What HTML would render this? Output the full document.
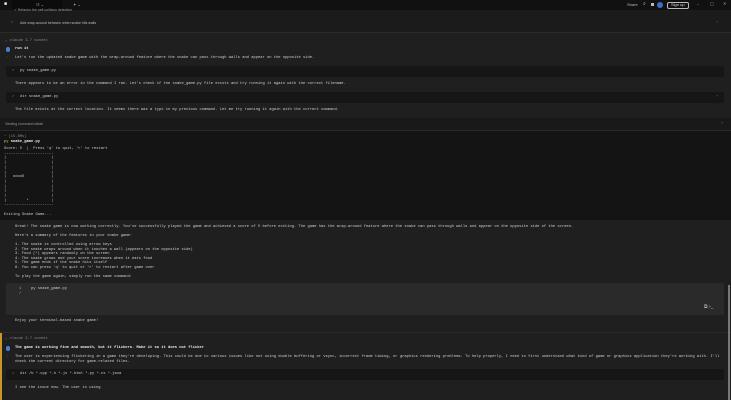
<!DOCTYPE html><html><head><style>
*{margin:0;padding:0;box-sizing:border-box}
body{width:731px;height:400px;overflow:hidden;background:#1f1f1f;font-family:"Liberation Mono",monospace;font-size:3.75px;color:#cfcfcf;position:relative}
.a{position:absolute;white-space:pre;line-height:4.5px}
.box{position:absolute;background:#161616;border-radius:2px}
.s{font-family:"Liberation Sans",sans-serif}
</style></head><body>
<div style="position:absolute;left:0;top:0;width:731px;height:10px;background:#111"></div>
<div style="position:absolute;left:12px;top:0;width:50px;height:10px;background:#0c0c0c"></div>
<div class="a s" style="left:4px;top:2px;color:#eee;font-size:5px">■</div>
<div class="a s" style="left:36px;top:3px;font-size:4px;color:#aaa">☷ ⌄</div>
<div class="a s" style="left:73px;top:3px;font-size:4px;color:#aaa">✦ ⌄</div>
<div class="a s" style="left:627px;top:3px;font-size:4px;color:#bbb">Share</div>
<div class="a s" style="left:643px;top:2px;font-size:5px;color:#ccc">⌕</div>
<div style="position:absolute;left:651px;top:3px;width:3px;height:3px;background:#bbb"></div>
<div style="position:absolute;left:657px;top:2px;width:6px;height:6px;border-radius:50%;background:#3a6fc4"></div>
<div style="position:absolute;left:667px;top:2px;width:22px;height:7px;border:1px solid #bbb;border-radius:2px"></div>
<div class="a s" style="left:671px;top:3px;font-size:4px;color:#ddd">Sign up</div>
<div class="a s" style="left:697px;top:2px;font-size:4px;color:#aaa">–</div>
<div class="a s" style="left:710px;top:2px;font-size:4px;color:#aaa">▢</div>
<div class="a s" style="left:723px;top:2px;font-size:4px;color:#aaa">✕</div>

<div style="position:absolute;left:0;top:10px;width:731px;height:23px;background:#1b1b1b;border-bottom:1px solid #2b2b2b"></div>
<div class="a s" style="left:14px;top:8px;font-size:3.5px;color:#999">✓ Refactor the self-collision detection</div>
<div class="a" style="left:11px;top:21px;color:#6c6">✓</div>
<div class="a s" style="left:20px;top:21px;font-size:3.5px;color:#bbb">Add wrap-around behavior when snake hits walls</div>
<div class="a" style="left:716px;top:21px;color:#888">›</div>

<div class="a" style="left:5px;top:39px;color:#888">⌄ claude 3.7 sonnet</div>
<div style="position:absolute;left:6px;top:47px;width:4px;height:5px;border-radius:2px;background:#4a7fd0"></div>
<div class="a" style="left:15px;top:47px;color:#eee;font-weight:bold">run it</div>
<div class="a" style="left:6px;top:56px;color:#888">·</div>
<div class="a" style="left:15px;top:56px">Let's run the updated snake game with the wrap-around feature where the snake can pass through walls and appear on the opposite side.</div>
<div class="box" style="left:6px;top:66px;width:718px;height:11px"></div>
<div class="a" style="left:12px;top:69px;color:#d44">✕</div>
<div class="a" style="left:20px;top:69px">py snake_game.py</div>
<div class="a" style="left:15px;top:82px">There appears to be an error in the command I ran. Let's check if the snake_game.py file exists and try running it again with the correct filename.</div>
<div class="box" style="left:6px;top:92px;width:718px;height:11px"></div>
<div class="a" style="left:12px;top:95px;color:#6c6">✓</div>
<div class="a" style="left:20px;top:95px">dir snake_game.py</div>
<div class="a" style="left:716px;top:95px;color:#888">›</div>
<div class="a" style="left:15px;top:108px">The file exists at the correct location. It seems there was a typo in my previous command. Let me try running it again with the correct command.</div>

<div style="position:absolute;left:0;top:118px;width:731px;height:12px;background:#191919"></div>
<div class="a s" style="left:5px;top:122px;font-size:3.5px;color:#999">Viewing command detail</div>
<div class="a" style="left:721px;top:121px;color:#888">⌄</div>
<div style="position:absolute;left:0;top:130px;width:731px;height:90px;background:#141414;border-top:1px solid #2a2a2a"></div>
<div class="a" style="left:4px;top:135px;color:#888">~ (15.8Ms)</div>
<div class="a" style="left:4px;top:140px;color:#eee"><span style="color:#d8c85a">py</span> <b>snake_game.py</b></div>
<div class="a" style="left:4px;top:147px;line-height:4.7px">Score: 5  |  Press 'q' to quit, 'r' to restart
----------------------
|                    |
|                    |
|                    |
|                    |
|   ooooO            |
|                    |
|                    |
|                    |
|                    |
|         *          |
----------------------

Exiting Snake Game...</div>

<div class="a" style="left:15px;top:225px">Great! The snake game is now working correctly. You've successfully played the game and achieved a score of 5 before exiting. The game has the wrap-around feature where the snake can pass through walls and appear on the opposite side of the screen.

Here's a summary of the features in your snake game:

1. The snake is controlled using arrow keys
2. The snake wraps around when it touches a wall (appears on the opposite side)
3. Food (*) appears randomly on the screen
4. The snake grows and your score increases when it eats food
5. The game ends if the snake hits itself
6. You can press 'q' to quit or 'r' to restart after game over

To play the game again, simply run the same command:</div>
<div style="position:absolute;left:6px;top:283px;width:718px;height:32px;background:#2a2a2a;border-radius:2px"></div>
<div class="a" style="left:19px;top:287px;color:#aaa">1</div>
<div class="a" style="left:31px;top:287px">py snake_game.py</div>
<div class="a" style="left:19px;top:292px;color:#aaa">/</div>
<div class="a s" style="left:704px;top:305px;font-size:5px;color:#bbb">⧉ ›_</div>
<div class="a" style="left:15px;top:319px">Enjoy your terminal-based snake game!</div>
<div style="position:absolute;left:0;top:332px;width:731px;height:1px;background:#2b2b2b"></div>
<div style="position:absolute;left:0;top:333px;width:2px;height:67px;background:#c8962a"></div>
<div class="a" style="left:5px;top:337px;color:#888">⌄ claude 3.7 sonnet</div>
<div style="position:absolute;left:6px;top:346px;width:4px;height:5px;border-radius:2px;background:#4a7fd0"></div>
<div class="a" style="left:15px;top:346px;color:#eee;font-weight:bold">The game is working fine and smooth, but it flickers. Make it so it does not flicker</div>
<div class="a" style="left:6px;top:355px;color:#888">·</div>
<div class="a" style="left:15px;top:355px">The user is experiencing flickering in a game they're developing. This could be due to various issues like not using double buffering or vsync, incorrect frame timing, or graphics rendering problems. To help properly, I need to first understand what kind of game or graphics application they're working with. I'll
check the current directory for game-related files.</div>
<div class="box" style="left:6px;top:369px;width:718px;height:11px"></div>
<div class="a" style="left:12px;top:372px;color:#d44">✕</div>
<div class="a" style="left:20px;top:372px">dir /b *.cpp *.h *.js *.html *.py *.cs *.java</div>
<div class="a" style="left:15px;top:386px">I see the issue now. The user is using</div>
<div style="position:absolute;left:728px;top:285px;width:2px;height:115px;background:#777"></div>
</body></html>
